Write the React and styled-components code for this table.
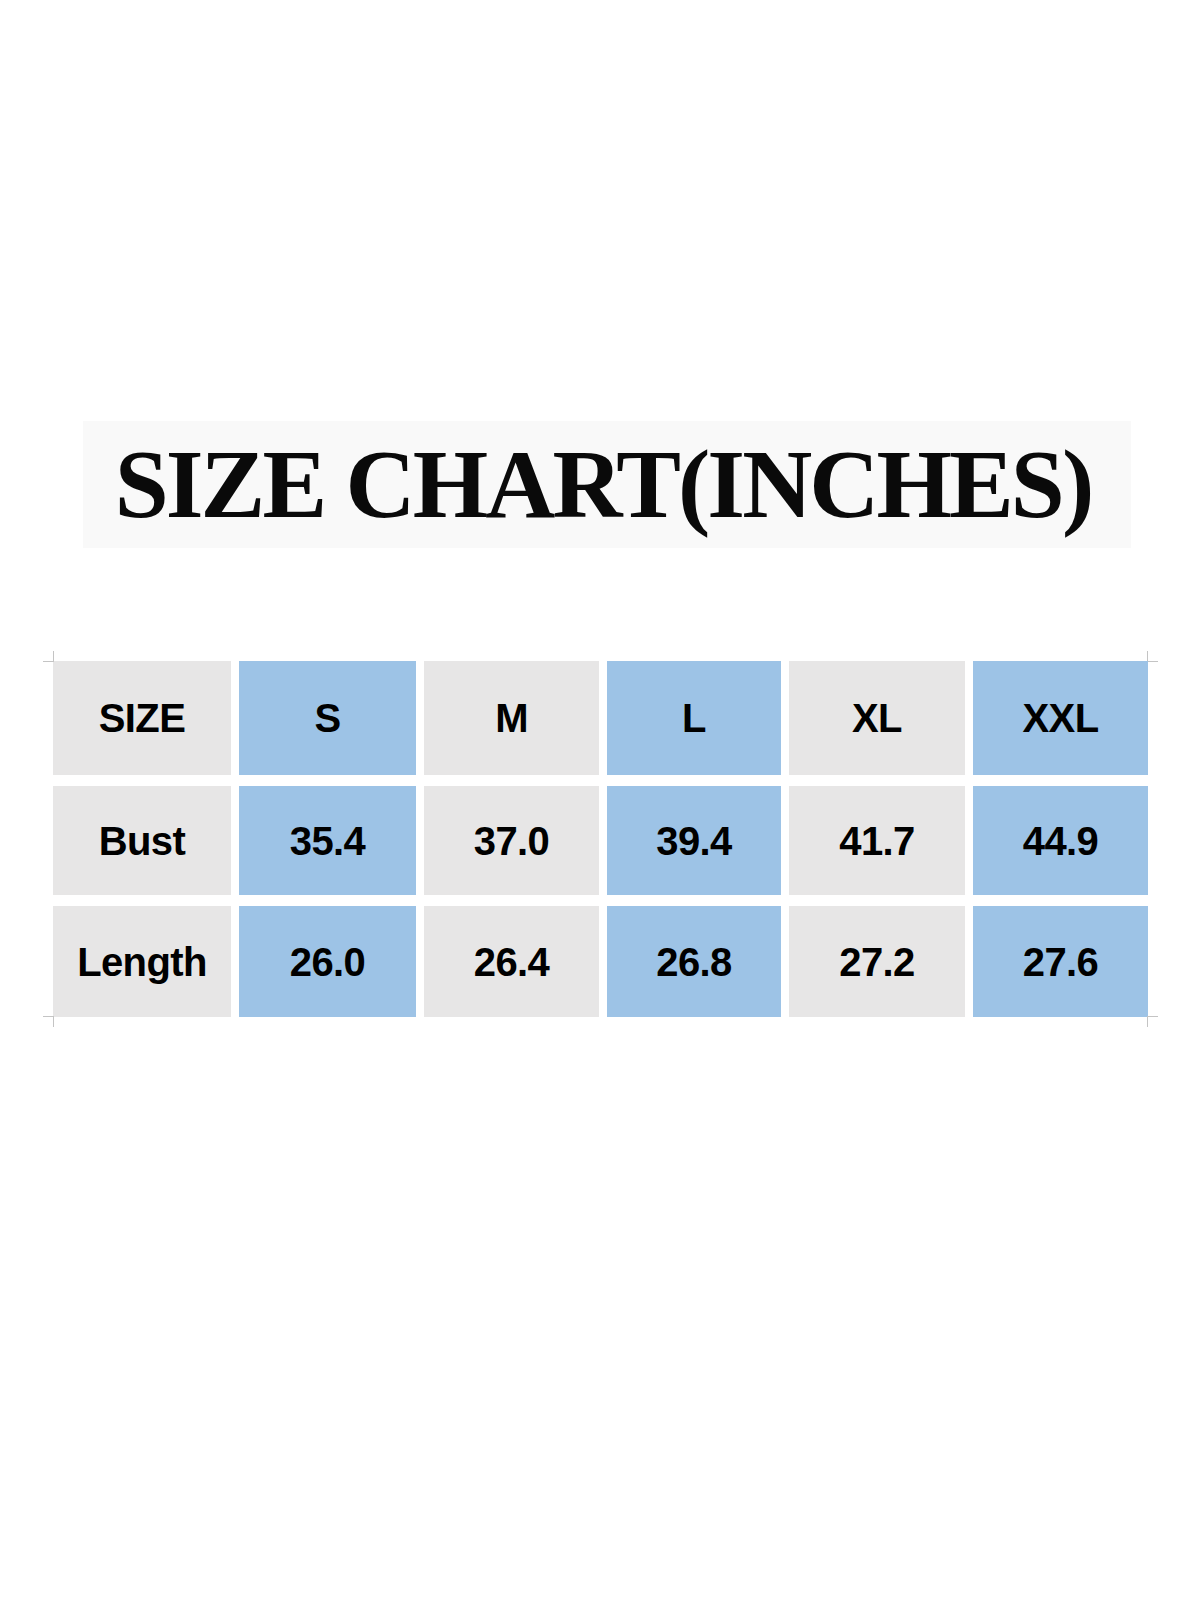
import React from "react";
import styled, { createGlobalStyle } from "styled-components";

const GlobalStyle = createGlobalStyle`
  html, body {
    margin: 0;
    padding: 0;
    background: #ffffff;
  }
  * {
    box-sizing: border-box;
  }
`;

const sizes = ["S", "M", "L", "XL", "XXL"];
const rows = [
  { label: "Bust", values: ["35.4", "37.0", "39.4", "41.7", "44.9"] },
  { label: "Length", values: ["26.0", "26.4", "26.8", "27.2", "27.6"] },
];

const Page = styled.div`
  width: 1200px;
  min-height: 1600px;
  padding: 421px 0 0 53px;
  display: flex;
  flex-direction: column;
  align-items: flex-start;
`;

const TitleBox = styled.div`
  margin-left: 30px;
  width: 1048px;
  height: 127px;
  background: #f9f9f9;
  display: flex;
  align-items: center;
  justify-content: center;
  padding-right: 8px;
`;

const Title = styled.h1`
  margin: 0;
  font-family: "Liberation Serif", "Times New Roman", serif;
  font-weight: 700;
  font-size: 97px;
  line-height: 1;
  letter-spacing: -2.9px;
  color: #0a0a0a;
  white-space: nowrap;
`;

/* crop marks sit on the frame's corners */
const TableFrame = styled.div`
  position: relative;
  margin-top: 113px;

  &::before,
  &::after {
    content: "";
    position: absolute;
    width: 10px;
    height: 10px;
    pointer-events: none;
  }
  &::before {
    right: -10px;
    top: -10px;
    border-left: 1px solid #c4c4c4;
    border-bottom: 1px solid #c4c4c4;
  }
  &::after {
    left: -10px;
    bottom: -10px;
    border-right: 1px solid #c4c4c4;
    border-top: 1px solid #c4c4c4;
  }
`;

const Table = styled.div`
  position: relative;
  display: grid;
  grid-template-columns: 178px 177px 175px 174px 176px 175px;
  grid-template-rows: 114px 109px 111px;
  column-gap: 8px;
  row-gap: 11px;

  &::before,
  &::after {
    content: "";
    position: absolute;
    width: 10px;
    height: 10px;
    pointer-events: none;
  }
  &::before {
    left: -10px;
    top: -10px;
    border-right: 1px solid #c4c4c4;
    border-bottom: 1px solid #c4c4c4;
  }
  &::after {
    right: -10px;
    bottom: -10px;
    border-left: 1px solid #c4c4c4;
    border-top: 1px solid #c4c4c4;
  }
`;

const Cell = styled.div`
  background: ${(p) => (p.$blue ? "#9dc3e6" : "#e7e6e6")};
  display: flex;
  align-items: center;
  justify-content: center;
  font-family: "Liberation Sans", Arial, sans-serif;
  font-weight: 700;
  font-size: 40px;
  line-height: 1;
  letter-spacing: -0.6px;
  color: #000000;
`;

export default function App() {
  return (
    <>
      <GlobalStyle />
      <Page>
        <TitleBox>
          <Title>SIZE CHART(INCHES)</Title>
        </TitleBox>
        <TableFrame>
          <Table>
            <Cell>SIZE</Cell>
            {sizes.map((s, i) => (
              <Cell key={s} $blue={i % 2 === 0}>
                {s}
              </Cell>
            ))}
            {rows.map((row) => (
              <React.Fragment key={row.label}>
                <Cell>{row.label}</Cell>
                {row.values.map((v, i) => (
                  <Cell key={i} $blue={i % 2 === 0}>
                    {v}
                  </Cell>
                ))}
              </React.Fragment>
            ))}
          </Table>
        </TableFrame>
      </Page>
    </>
  );
}
